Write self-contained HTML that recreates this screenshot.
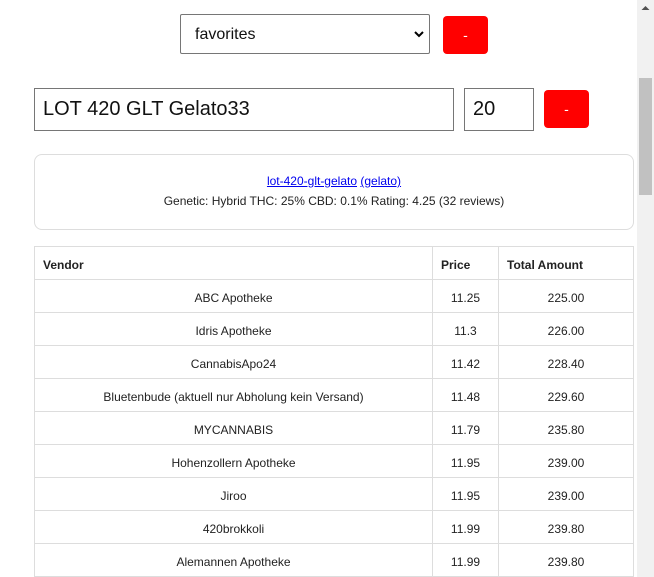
<!DOCTYPE html>
<html><head><style>
body{margin:0;width:654px;height:577px;overflow:hidden;background:#fff;font-family:"Liberation Sans",sans-serif;position:relative}
.a{position:absolute;box-sizing:border-box}
.btn{background:#f00;border-radius:4px;color:#fff;font-size:14px;text-align:center}
table{position:absolute;left:34px;top:246px;width:600px;border-collapse:collapse;font-size:12px;color:#222}
td,th{border:1px solid #ddd;height:33px;padding:3px 8px 0;box-sizing:border-box}
th{text-align:left;font-weight:bold}
td{text-align:center}
</style></head><body>
<div class="a" style="left:180px;top:14px;width:250px;height:40px;border:1px solid #767676;border-radius:2px;font-size:16px;padding:11px 14px;color:#111">favorites
<svg style="position:absolute;right:5px;top:15px" width="10" height="8" viewBox="0 0 10 8"><path d="M1 2 L5 6 L9 2" stroke="#000" stroke-width="2" fill="none"/></svg></div>
<div class="a btn" style="left:443px;top:16px;width:45px;height:38px;line-height:38px">-</div>
<div class="a" style="left:34px;top:88px;width:420px;height:43px;border:1px solid #767676;font-size:20px;padding:9px 8px;color:#111">LOT 420 GLT Gelato33</div>
<div class="a" style="left:464px;top:88px;width:70px;height:43px;border:1px solid #767676;font-size:20px;padding:9px 8px;color:#111">20</div>
<div class="a btn" style="left:544px;top:90px;width:45px;height:38px;line-height:38px">-</div>
<div class="a" style="left:34px;top:154px;width:600px;height:76px;border:1px solid #ddd;border-radius:8px;text-align:center;font-size:12px;color:#222">
<div style="margin-top:19px"><span style="color:#00e;text-decoration:underline">lot-420-glt-gelato</span> <span style="color:#00e;text-decoration:underline">(gelato)</span></div>
<div style="margin-top:6px">Genetic: Hybrid THC: 25% CBD: 0.1% Rating: 4.25 (32 reviews)</div></div>
<table>
<tr><th style="width:398px">Vendor</th><th style="width:66px">Price</th><th>Total Amount</th></tr>
<tr><td>ABC Apotheke</td><td>11.25</td><td>225.00</td></tr>
<tr><td>Idris Apotheke</td><td>11.3</td><td>226.00</td></tr>
<tr><td>CannabisApo24</td><td>11.42</td><td>228.40</td></tr>
<tr><td>Bluetenbude (aktuell nur Abholung kein Versand)</td><td>11.48</td><td>229.60</td></tr>
<tr><td>MYCANNABIS</td><td>11.79</td><td>235.80</td></tr>
<tr><td>Hohenzollern Apotheke</td><td>11.95</td><td>239.00</td></tr>
<tr><td>Jiroo</td><td>11.95</td><td>239.00</td></tr>
<tr><td>420brokkoli</td><td>11.99</td><td>239.80</td></tr>
<tr><td>Alemannen Apotheke</td><td>11.99</td><td>239.80</td></tr>
</table>
<div class="a" style="left:637px;top:0;width:17px;height:577px;background:#f1f1f1"></div>
<div class="a" style="left:639px;top:78px;width:13px;height:117px;background:#c1c1c1"></div>
<svg class="a" style="left:641px;top:5px" width="9" height="6"><path d="M0.5 5 L4.5 1 L8.5 5Z" fill="#505050"/></svg>
</body></html>
